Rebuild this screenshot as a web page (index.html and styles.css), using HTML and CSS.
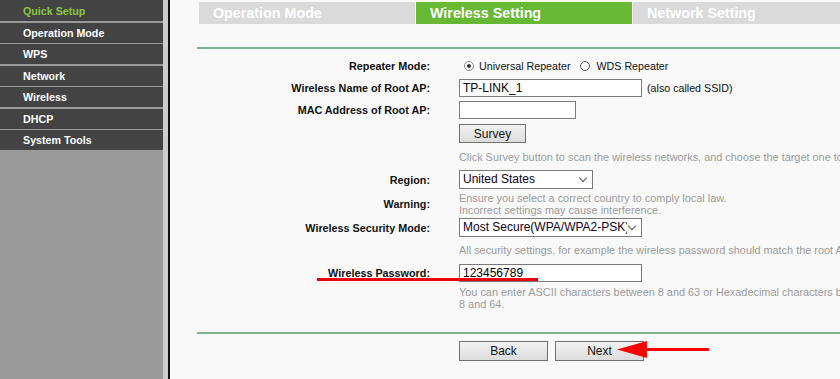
FILE: index.html
```html
<!DOCTYPE html>
<html>
<head>
<meta charset="utf-8">
<link rel="stylesheet" href="styles.css">
</head>
<body>
<div class="page">
  <nav class="sidebar">
    <div class="menu-item first active">Quick Setup</div>
    <div class="menu-item">Operation Mode</div>
    <div class="menu-item">WPS</div>
    <div class="menu-item">Network</div>
    <div class="menu-item">Wireless</div>
    <div class="menu-item">DHCP</div>
    <div class="menu-item">System Tools</div>
  </nav>
  <div class="strip"></div>
  <div class="divider"></div>
  <main class="main">
    <div class="tabs">
      <div class="tab">Operation Mode</div>
      <div class="tab current">Wireless Setting</div>
      <div class="tab">Network Setting</div>
    </div>
    <div class="rule"></div>
    <div class="form">
      <div class="row r1">
        <div class="label">Repeater Mode:</div>
        <div class="value radios">
          <span class="radio checked"></span><span class="opt">Universal Repeater</span>
          <span class="radio second"></span><span class="opt">WDS Repeater</span>
        </div>
      </div>
      <div class="row r2">
        <div class="label">Wireless Name of Root AP:</div>
        <div class="value"><input class="field wide" type="text" value="TP-LINK_1"><span class="note">(also called SSID)</span></div>
      </div>
      <div class="row r3">
        <div class="label">MAC Address of Root AP:</div>
        <div class="value"><input class="field mac" type="text" value=""></div>
      </div>
      <div class="row r4">
        <div class="label"></div>
        <div class="value"><button class="btn survey">Survey</button></div>
      </div>
      <div class="row r5">
        <div class="label"></div>
        <div class="value hint">Click Survey button to scan the wireless networks, and choose the target one to connect.</div>
      </div>
      <div class="row r6">
        <div class="label">Region:</div>
        <div class="value"><div class="select region"><span class="sel-text">United States</span></div></div>
      </div>
      <div class="row r7">
        <div class="label">Warning:</div>
        <div class="value hint">Ensure you select a correct country to comply local law.<br>Incorrect settings may cause interference.</div>
      </div>
      <div class="row r8">
        <div class="label">Wireless Security Mode:</div>
        <div class="value"><div class="select security"><span class="sel-text">Most Secure(WPA/WPA2-PSK)</span></div></div>
      </div>
      <div class="row r9">
        <div class="label"></div>
        <div class="value hint">All security settings, for example the wireless password should match the root AP.</div>
      </div>
      <div class="row r10">
        <div class="label">Wireless Password:</div>
        <div class="value"><input class="field wide" type="text" value="123456789"></div>
      </div>
      <div class="row r11">
        <div class="label"></div>
        <div class="value hint">You can enter ASCII characters between 8 and 63 or Hexadecimal characters between<br>8 and 64.</div>
      </div>
    </div>
    <div class="rule bottom"></div>
    <div class="actions">
      <button class="btn nav">Back</button>
      <button class="btn nav">Next</button>
    </div>
  </main>
  <div class="underline"></div>
  <svg class="arrow" width="100" height="22" viewBox="0 0 100 22">
    <polygon points="0,11.5 30,3 30,20" fill="#f00"/>
    <rect x="27" y="10" width="65" height="3" fill="#f00"/>
  </svg>
</div>
</body>
</html>
```
FILE: styles.css
```css
* { box-sizing: border-box; }
html, body {
  margin: 0;
  padding: 0;
  width: 840px;
  height: 379px;
  overflow: hidden;
  background: #f9f9f9;
  font-family: "Liberation Sans", Arial, sans-serif;
}
.page {
  position: relative;
  display: flex;
  width: 840px;
  height: 379px;
}
.sidebar {
  width: 163px;
  flex: none;
  background: #9a9a9a;
  display: flex;
  flex-direction: column;
  gap: 1.5px;
}
.menu-item {
  height: 20px;
  background: #434343;
  color: #fff;
  font-weight: bold;
  font-size: 10.7px;
  line-height: 20px;
  padding-left: 23px;
  white-space: nowrap;
}
.menu-item.first { height: 21px; line-height: 22px; }
.menu-item.active { color: #8cc63f; }
.strip { width: 5px; flex: none; background: #cdcdcd; }
.divider { width: 2px; flex: none; background: #111; }
.main {
  flex: 1;
  min-width: 0;
  background: #f9f9f9;
  padding-top: 2px;
  overflow: hidden;
}
.tabs {
  display: flex;
  gap: 1px;
  margin-left: 29px;
  height: 22px;
  white-space: nowrap;
}
.tab {
  width: 216px;
  flex: none;
  background: #dadada;
  color: #fff;
  font-weight: bold;
  font-size: 14.3px;
  line-height: 22px;
  padding-left: 14px;
}
.tab.current { background: #67b934; }
.rule {
  height: 2px;
  margin-left: 27px;
  margin-top: 23px;
  background: #7eb395;
}
.rule.bottom { margin-top: 21px; }
.form { margin-top: 5px; }
.row {
  display: flex;
  align-items: center;
  white-space: nowrap;
}
.label {
  width: 260px;
  flex: none;
  margin-right: 29px;
  text-align: right;
  font-weight: bold;
  font-size: 10.8px;
  color: #111;
}
.value {
  display: flex;
  align-items: center;
  font-size: 10.7px;
  color: #111;
}
.r1 { height: 23px; }
.r2 { height: 22px; }
.r3 { height: 22px; }
.r4 { height: 25px; }
.r5 { height: 21px; }
.r6 { height: 25px; }
.r7 { height: 24px; }
.r8 { height: 23px; }
.r9 { height: 22px; }
.r10 { height: 24px; }
.r11 { height: 26px; }
.radios { padding-top: 1px; }
.radio {
  width: 10px;
  height: 10px;
  border: 1px solid #8a8a8a;
  border-radius: 50%;
  background: #fff;
  display: inline-flex;
  align-items: center;
  justify-content: center;
  margin-left: 5px;
  margin-right: 5px;
}
.radio.checked::after {
  content: "";
  width: 4px;
  height: 4px;
  border-radius: 50%;
  background: #333;
}
.radio.second { border-color: #555; margin-left: 10px; margin-right: 6px; }
.field {
  height: 18px;
  border: 1px solid #7a7a7a;
  background: #fff;
  font-family: "Liberation Sans", Arial, sans-serif;
  font-size: 12px;
  color: #000;
  padding: 0 3px;
  margin: 0;
  outline: none;
}
.field.wide { width: 183px; }
.field.mac { width: 117px; }
.note { margin-left: 5px; }
.btn {
  font-family: "Liberation Sans", Arial, sans-serif;
  font-size: 12px;
  color: #111;
  border: 1px solid #707070;
  background: linear-gradient(#f2f2f2, #dcdcdc);
  border-radius: 0;
  padding: 0;
  margin: 0;
}
.btn.survey { width: 67px; height: 19px; }
.hint {
  display: block;
  color: #9b9b9b;
  font-size: 10.9px;
  line-height: 12px;
}
.select {
  position: relative;
  height: 19px;
  border: 1px solid #7a7a7a;
  background: #fff;
  font-size: 12px;
  color: #100020;
  line-height: 17px;
  padding-left: 3px;
  overflow: hidden;
}
.select::after {
  content: "";
  position: absolute;
  right: 6px;
  top: 4px;
  width: 5px;
  height: 5px;
  border-right: 1px solid #555;
  border-bottom: 1px solid #555;
  transform: rotate(45deg);
}
.select.region { width: 134px; }
.select.security { width: 183px; padding-right: 16px; }
.sel-text { display: block; overflow: hidden; white-space: nowrap; }
.select.security .sel-text { width: 164px; }
.actions {
  display: flex;
  gap: 7px;
  margin-top: 7px;
  padding-left: 289px;
}
.btn.nav { width: 89px; height: 20px; }
.underline {
  position: absolute;
  left: 317px;
  top: 278px;
  width: 221px;
  height: 3px;
  background: #e8000b;
}
.arrow {
  position: absolute;
  left: 617px;
  top: 338px;
}
```
